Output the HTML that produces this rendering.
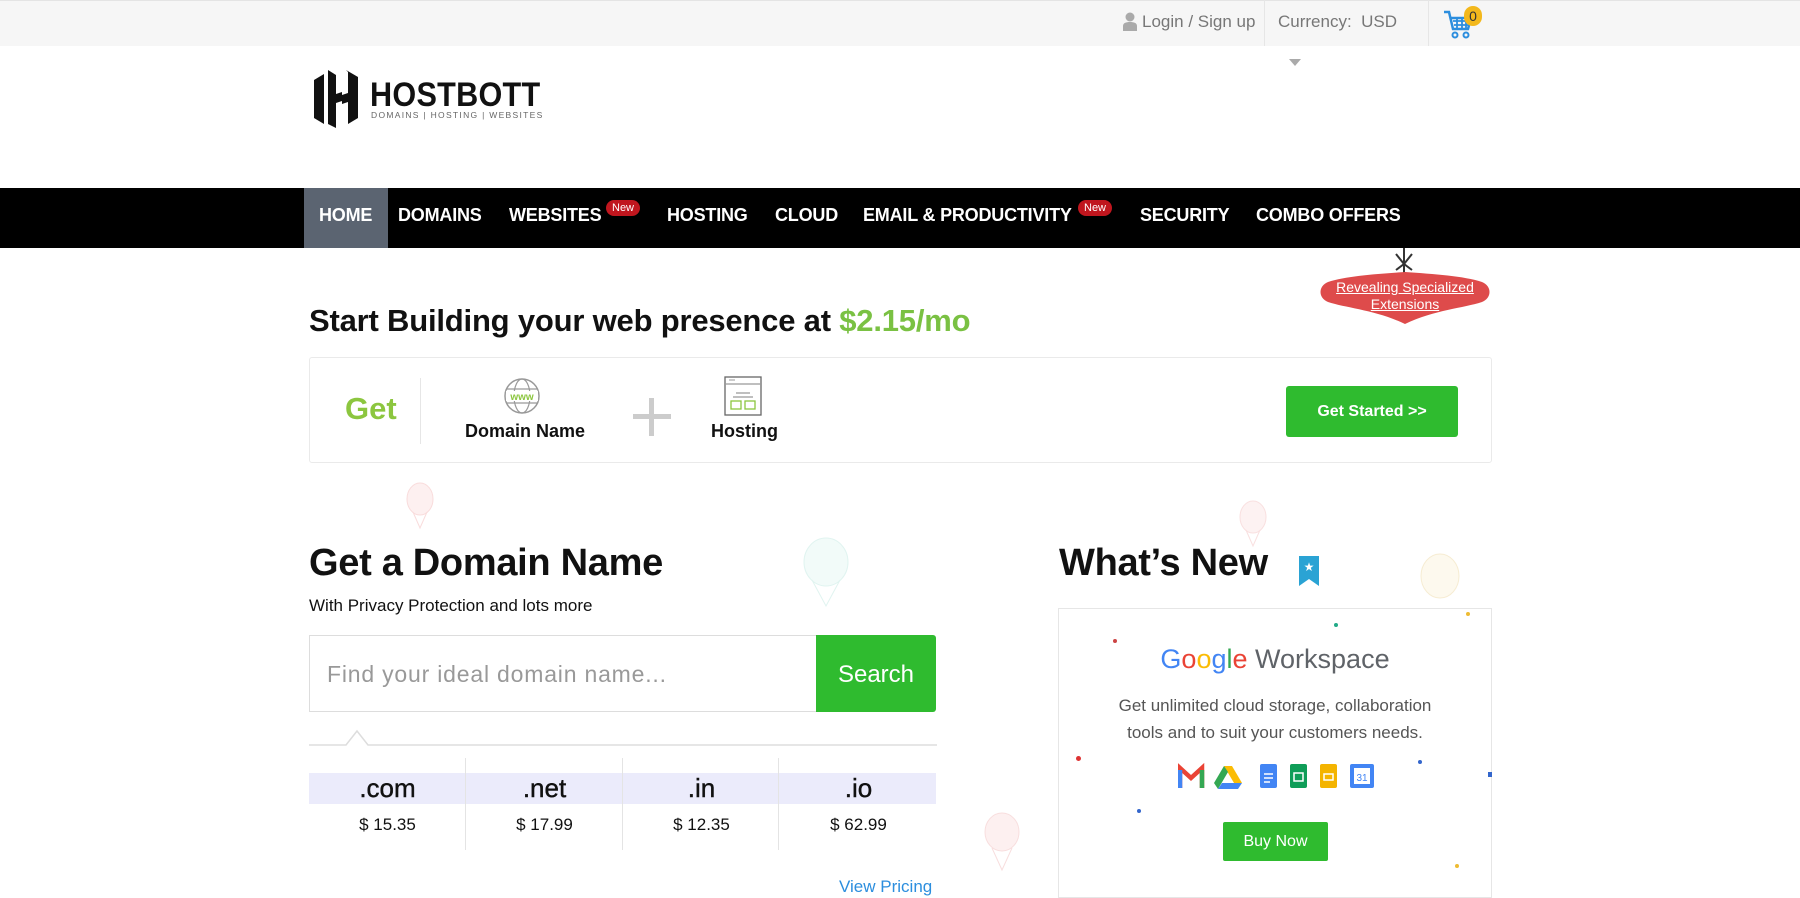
<!DOCTYPE html>
<html><head><meta charset="utf-8"><style>
*{margin:0;padding:0;box-sizing:border-box}
body{width:1800px;height:885px;overflow:hidden;background:#fff;font-family:"Liberation Sans",Arial,sans-serif;position:relative;color:#111}
.a{position:absolute;white-space:nowrap}
.nav span{position:absolute;top:17px;color:#fff;font-weight:bold;font-size:18px;letter-spacing:-0.2px}
.badge{position:absolute;top:12px;background:#c0161e;color:#fff;font-size:11px;border-radius:9px;padding:2px 6px;font-weight:normal}
.tld{position:absolute;top:0;width:157px;text-align:center}
</style></head><body>
<div class="a" style="left:0;top:0;width:1800px;height:46px;background:#f6f6f6;border-top:1px solid #e4e4e4"></div>
<div class="a" style="left:1264px;top:0;width:1px;height:46px;background:#e6e6e6"></div>
<div class="a" style="left:1428px;top:0;width:1px;height:46px;background:#e6e6e6"></div>
<svg class="a" style="left:1122px;top:12px" width="16" height="20" viewBox="0 0 16 20"><circle cx="8" cy="5" r="4.5" fill="#aaa"/><path d="M1 19v-5c0-3 3-4 7-4s7 1 7 4v5z" fill="#aaa"/></svg>
<div class="a" style="left:1142px;top:12px;font-size:17px;color:#777">Login / Sign up</div>
<div class="a" style="left:1278px;top:12px;font-size:17px;color:#777">Currency:&nbsp; USD</div>
<svg class="a" style="left:1442px;top:8px" width="32" height="32" viewBox="0 0 32 32"><path d="M2 4h5l4 17h15l3-11H9" fill="none" stroke="#2c8ede" stroke-width="2.5"/><path d="M11 13h17M12 17h15M15 10v11M20 10v11M24 10v11" stroke="#2c8ede" stroke-width="1.8"/><circle cx="13" cy="27" r="2.5" fill="none" stroke="#2c8ede" stroke-width="2"/><circle cx="24" cy="27" r="2.5" fill="none" stroke="#2c8ede" stroke-width="2"/></svg>
<div class="a" style="left:1464px;top:6px;width:18px;height:20px;border-radius:9px;background:#f3b81c;color:#333;font-size:14px;text-align:center;line-height:20px">0</div>
<div class="a" style="left:1289px;top:59px;width:0;height:0;border-left:6px solid transparent;border-right:6px solid transparent;border-top:7px solid #aaa"></div>
<svg class="a" style="left:312px;top:68px" width="50" height="62" viewBox="0 0 50 62"><path d="M2 12L12 6V56L2 50Z M16 2L24 7V26L30 24V33L24 35V60L16 56Z M34 2L46 9V50L36 56V34L30 36V27L36 25V4Z" fill="#111"/></svg>
<div class="a" style="left:370px;top:76px;font-size:34px;font-weight:bold;letter-spacing:0.3px;color:#111;transform:scaleX(0.9);transform-origin:left">HOSTBOTT</div>
<div class="a" style="left:371px;top:110px;font-size:8.5px;letter-spacing:1.3px;color:#666">DOMAINS | HOSTING | WEBSITES</div>
<div class="a nav" style="left:0;top:188px;width:1800px;height:60px;background:#000">
<div style="position:absolute;left:304px;top:0;width:84px;height:60px;background:#5b6471"></div>
<span style="left:319px">HOME</span>
<span style="left:398px">DOMAINS</span>
<span style="left:509px">WEBSITES</span><div class="badge" style="left:606px">New</div>
<span style="left:667px">HOSTING</span>
<span style="left:775px">CLOUD</span>
<span style="left:863px">EMAIL &amp; PRODUCTIVITY</span><div class="badge" style="left:1078px">New</div>
<span style="left:1140px">SECURITY</span>
<span style="left:1256px">COMBO OFFERS</span>
</div>
<svg class="a" style="left:1316px;top:248px" width="178" height="78" viewBox="0 0 178 78"><path d="M88 0V26M80 6l8 10 8-10M80 22l8-6 8 6" stroke="#333" stroke-width="2" fill="none"/><path d="M89 24C60 26 30 28 12 34 2 38 2 50 12 54 30 60 60 62 89 76 118 62 148 60 166 54 176 50 176 38 166 34 148 28 118 26 89 24Z" fill="#de4b4b"/></svg>
<div class="a" style="left:1318px;top:279px;width:174px;text-align:center;font-size:14px;line-height:17px;color:#fff;text-decoration:underline;white-space:normal">Revealing Specialized Extensions</div>
<div class="a" style="left:309px;top:303px;font-size:31px;font-weight:bold;color:#111;letter-spacing:-0.2px">Start Building your web presence at <span style="color:#7ac143">$2.15/mo</span></div>
<div class="a" style="left:309px;top:357px;width:1183px;height:106px;border:1px solid #eaeaea;border-radius:3px"></div>
<div class="a" style="left:345px;top:391px;font-size:31px;font-weight:bold;color:#8cc63f">Get</div>
<div class="a" style="left:420px;top:378px;width:1px;height:66px;background:#e6e6e6"></div>
<svg class="a" style="left:503px;top:376px" width="38" height="40" viewBox="0 0 38 40"><circle cx="19" cy="20" r="17" fill="none" stroke="#999" stroke-width="1.5"/><ellipse cx="19" cy="20" rx="8" ry="17" fill="none" stroke="#999" stroke-width="1.2"/><path d="M3 13h32M3 27h32" stroke="#999" stroke-width="1.2"/><rect x="3" y="15" width="32" height="10" fill="#fff"/><text x="19" y="24" text-anchor="middle" font-size="10" font-family="Liberation Sans" fill="#8cc63f" font-weight="bold">www</text></svg>
<div class="a" style="left:465px;top:421px;font-size:18px;font-weight:bold">Domain Name</div>
<div class="a" style="left:633px;top:414px;width:38px;height:5px;background:#ccc"></div>
<div class="a" style="left:649px;top:398px;width:5px;height:38px;background:#ccc"></div>
<svg class="a" style="left:724px;top:376px" width="38" height="40" viewBox="0 0 38 40"><rect x="1" y="1" width="36" height="38" fill="none" stroke="#666" stroke-width="1.3"/><path d="M1 8h36M12 17h14M9 21h20" stroke="#999" stroke-width="1.2"/><path d="M5 4h6" stroke="#999"/><rect x="7" y="25" width="10" height="8" fill="none" stroke="#8cc63f" stroke-width="1.3"/><rect x="21" y="25" width="10" height="8" fill="none" stroke="#8cc63f" stroke-width="1.3"/></svg>
<div class="a" style="left:711px;top:421px;font-size:18px;font-weight:bold">Hosting</div>
<div class="a" style="left:1286px;top:386px;width:172px;height:51px;background:#2fbb2f;border-radius:3px;color:#fff;font-weight:bold;font-size:16px;text-align:center;line-height:51px">Get Started &gt;&gt;</div>
<svg class="a" style="left:405px;top:482px" width="30" height="48"><ellipse cx="15" cy="17" rx="13" ry="16" fill="#fdf0f0" stroke="#f9dcdc" stroke-width="1"/><path d="M8 30l7 16 7-16" fill="none" stroke="#f9dcdc"/></svg>
<svg class="a" style="left:800px;top:536px" width="52" height="72"><ellipse cx="26" cy="26" rx="22" ry="24" fill="#f2fbf9" stroke="#e0f4f0" stroke-width="1"/><path d="M12 44l14 26 14-26" fill="none" stroke="#e0f4f0"/></svg>
<svg class="a" style="left:1238px;top:500px" width="30" height="48"><ellipse cx="15" cy="17" rx="13" ry="16" fill="#fdf2f2" stroke="#f9e0e0" stroke-width="1"/><path d="M8 30l7 16 7-16" fill="none" stroke="#f9e0e0"/></svg>
<svg class="a" style="left:1418px;top:552px" width="44" height="62"><ellipse cx="22" cy="24" rx="19" ry="22" fill="#fdf9ee" stroke="#f6ecd2" stroke-width="1"/></svg>
<svg class="a" style="left:982px;top:812px" width="40" height="60"><ellipse cx="20" cy="20" rx="17" ry="19" fill="#fdf0f0" stroke="#f8dede" stroke-width="1"/><path d="M10 36l10 22 10-22" fill="none" stroke="#f8dede"/></svg>
<div class="a" style="left:309px;top:542px;font-size:38px;font-weight:bold;letter-spacing:-0.3px">Get a Domain Name</div>
<div class="a" style="left:309px;top:596px;font-size:17px">With Privacy Protection and lots more</div>
<div class="a" style="left:309px;top:635px;width:508px;height:77px;border:1px solid #ddd;border-right:none"></div>
<div class="a" style="left:327px;top:661px;font-size:23px;color:#999;letter-spacing:0.8px">Find your ideal domain name...</div>
<div class="a" style="left:816px;top:635px;width:120px;height:77px;background:#2fbb2f;border-radius:0 3px 3px 0;color:#fff;font-size:24px;text-align:center;line-height:79px">Search</div>
<svg class="a" style="left:309px;top:726px" width="628" height="22"><path d="M0 19H37L48 5 59 19H628" fill="none" stroke="#ddd" stroke-width="1.5"/></svg>
<div class="a" style="left:309px;top:773px;width:627px;height:31px;background:#ebebfb"></div>
<div class="a" style="left:465px;top:758px;width:1px;height:92px;background:#e4e4e4"></div>
<div class="a" style="left:622px;top:758px;width:1px;height:92px;background:#e4e4e4"></div>
<div class="a" style="left:778px;top:758px;width:1px;height:92px;background:#e4e4e4"></div>
<div class="a" style="left:309px;top:773px;width:628px;height:80px">
<div class="tld" style="left:0"><div style="font-size:26px;line-height:31px;-webkit-text-stroke:0.4px #111">.com</div><div style="font-size:17px;margin-top:11px">$ 15.35</div></div>
<div class="tld" style="left:157px"><div style="font-size:26px;line-height:31px;-webkit-text-stroke:0.4px #111">.net</div><div style="font-size:17px;margin-top:11px">$ 17.99</div></div>
<div class="tld" style="left:314px"><div style="font-size:26px;line-height:31px;-webkit-text-stroke:0.4px #111">.in</div><div style="font-size:17px;margin-top:11px">$ 12.35</div></div>
<div class="tld" style="left:471px"><div style="font-size:26px;line-height:31px;-webkit-text-stroke:0.4px #111">.io</div><div style="font-size:17px;margin-top:11px">$ 62.99</div></div>
</div>
<div class="a" style="left:839px;top:877px;font-size:17px;color:#2c8ede">View Pricing</div>
<div class="a" style="left:1059px;top:542px;font-size:38px;font-weight:bold;letter-spacing:-0.3px">What’s New</div>
<svg class="a" style="left:1299px;top:556px" width="20" height="30" viewBox="0 0 20 30"><path d="M0 0h20v30l-10-7-10 7z" fill="#2aa3d4"/><text x="10" y="15" text-anchor="middle" font-size="12" fill="#fff" font-family="DejaVu Sans">★</text></svg>
<div class="a" style="left:1058px;top:608px;width:434px;height:290px;border:1px solid #e6e6e6"></div>
<div class="a" style="left:1058px;top:644px;width:434px;text-align:center;font-size:27px;color:#5f6368"><span style="color:#4285f4">G</span><span style="color:#ea4335">o</span><span style="color:#fbbc05">o</span><span style="color:#4285f4">g</span><span style="color:#34a853">l</span><span style="color:#ea4335">e</span> Workspace</div>
<div class="a" style="left:1058px;top:692px;width:434px;text-align:center;font-size:17px;line-height:27px;color:#555;white-space:normal">Get unlimited cloud storage, collaboration<br>tools and to suit your customers needs.</div>
<svg class="a" style="left:1178px;top:762px" width="200" height="30" viewBox="0 0 200 30">
<path d="M2 26V6l11 10 11-10v20" fill="none" stroke="#ea4335" stroke-width="4.5"/><path d="M2 26V8" stroke="#4285f4" stroke-width="4.5"/><path d="M24 26V8" stroke="#34a853" stroke-width="4.5"/>
<path d="M46 4h8l10 17h-8z" fill="#fbbc05"/><path d="M46 4l-10 17 4 6 10-17z" fill="#34a853"/><path d="M40 27h20l4-6H44z" fill="#4285f4"/>
<rect x="82" y="2" width="17" height="24" rx="2" fill="#4285f4"/><path d="M86 12h9M86 16h9M86 20h6" stroke="#fff" stroke-width="1.5"/>
<rect x="112" y="2" width="17" height="24" rx="2" fill="#0f9d58"/><rect x="116" y="11" width="9" height="8" fill="none" stroke="#fff" stroke-width="1.5"/>
<rect x="142" y="2" width="17" height="24" rx="2" fill="#f4b400"/><rect x="146" y="12" width="9" height="6" fill="none" stroke="#fff" stroke-width="1.5"/>
<rect x="172" y="2" width="24" height="24" rx="2" fill="#4285f4"/><rect x="176" y="6" width="16" height="16" fill="#fff"/><text x="184" y="19" text-anchor="middle" font-size="10" fill="#4285f4" font-family="Liberation Sans">31</text></svg>
<div class="a" style="left:1223px;top:822px;width:105px;height:39px;background:#2fbb2f;border-radius:2px;color:#fff;font-size:16px;text-align:center;line-height:39px">Buy Now</div>
<div class="a" style="left:1113px;top:639px;width:4px;height:4px;border-radius:2px;background:#c44"></div>
<div class="a" style="left:1334px;top:623px;width:4px;height:4px;border-radius:2px;background:#2a8"></div>
<div class="a" style="left:1466px;top:612px;width:4px;height:4px;border-radius:2px;background:#eb3"></div>
<div class="a" style="left:1076px;top:756px;width:5px;height:5px;border-radius:3px;background:#d33"></div>
<div class="a" style="left:1418px;top:760px;width:4px;height:4px;border-radius:2px;background:#36c"></div>
<div class="a" style="left:1488px;top:772px;width:4px;height:5px;background:#36c"></div>
<div class="a" style="left:1137px;top:809px;width:4px;height:4px;border-radius:2px;background:#36c"></div>
<div class="a" style="left:1455px;top:864px;width:4px;height:4px;border-radius:2px;background:#eb3"></div>
</body></html>
